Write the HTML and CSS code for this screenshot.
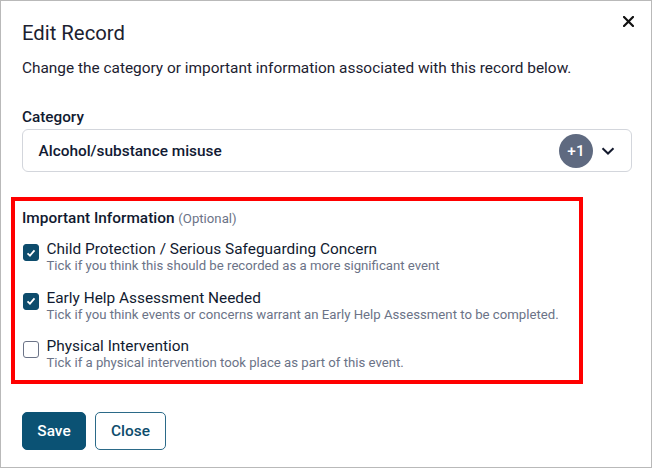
FILE: index.html
```html
<!DOCTYPE html>
<html lang="en">
<head>
<meta charset="utf-8">
<title>Edit Record</title>
<link rel="stylesheet" href="styles.css">
</head>
<body>
<div class="modal">
  <div class="header">
    <h1 class="title">Edit Record</h1>
    <button class="close-x" aria-label="Close">
      <svg width="11" height="11" viewBox="0 0 11 11"><path d="M1 1L10 10M10 1L1 10" stroke="#111" stroke-width="2.2" stroke-linecap="square"/></svg>
    </button>
  </div>
  <p class="desc">Change the category or important information associated with this record below.</p>

  <div class="field">
    <div class="label">Category</div>
    <div class="select">
      <span class="select-text">Alcohol/substance misuse</span>
      <span class="badge">+1</span>
      <svg class="chevron" width="14" height="8" viewBox="0 0 14 8"><path d="M1.5 1.2L7 6.5L12.5 1.2" fill="none" stroke="#141a2e" stroke-width="2"/></svg>
    </div>
  </div>

  <div class="highlight">
    <div class="section-title">Important Information <span class="optional">(Optional)</span></div>
    <div class="items">
      <div class="item">
        <span class="box checked"><svg width="16" height="16" viewBox="0 0 16 16"><path d="M4 8.3L6.8 11L12 5" fill="none" stroke="#fff" stroke-width="2"/></svg></span>
        <div class="item-text">
          <div class="item-title">Child Protection / Serious Safeguarding Concern</div>
          <div class="item-help">Tick if you think this should be recorded as a more significant event</div>
        </div>
      </div>
      <div class="item">
        <span class="box checked"><svg width="16" height="16" viewBox="0 0 16 16"><path d="M4 8.3L6.8 11L12 5" fill="none" stroke="#fff" stroke-width="2"/></svg></span>
        <div class="item-text">
          <div class="item-title">Early Help Assessment Needed</div>
          <div class="item-help">Tick if you think events or concerns warrant an Early Help Assessment to be completed.</div>
        </div>
      </div>
      <div class="item">
        <span class="box"></span>
        <div class="item-text">
          <div class="item-title">Physical Intervention</div>
          <div class="item-help">Tick if a physical intervention took place as part of this event.</div>
        </div>
      </div>
    </div>
  </div>

  <div class="actions">
    <button class="btn btn-primary">Save</button>
    <button class="btn btn-outline">Close</button>
  </div>
</div>
</body>
</html>
```

FILE: styles.css
```css
* { box-sizing: border-box; }
html, body { margin: 0; padding: 0; background: #fff; }
body { font-family: Roboto, "Liberation Sans", Arial, sans-serif; color: #1c2130; }

.modal {
  width: 652px;
  height: 468px;
  border: 1px solid #b9b9b9;
  padding: 19.5px 19.5px 0 21px;
  background: #fff;
}

.header {
  display: flex;
  justify-content: space-between;
  align-items: flex-start;
}
.title {
  margin: 0;
  font-size: 20.3px;
  line-height: 24px;
  font-weight: 400;
  color: #1c2130;
}
.close-x {
  width: 20px;
  height: 20px;
  margin: -9.5px -6.5px 0 0;
  padding: 0;
  border: 0;
  background: transparent;
  display: flex;
  align-items: center;
  justify-content: center;
}

.desc {
  margin: 13.5px 0 0 0;
  font-size: 15.4px;
  line-height: 20px;
  color: #1c2130;
}

.field { margin-top: 30px; }
.label {
  font-size: 15.3px;
  line-height: 18px;
  font-weight: 500;
  color: #111a30;
  margin-bottom: 3px;
}
.select {
  height: 43px;
  border: 1px solid #d3d6dc;
  border-radius: 6px;
  display: flex;
  align-items: center;
  padding: 0 16px 0 15.5px;
}
.select-text {
  flex: 1;
  font-size: 15.4px;
  font-weight: 500;
  color: #111a33;
}
.badge {
  width: 34px;
  height: 34px;
  border-radius: 50%;
  background: #5f6a80;
  color: #fff;
  font-size: 15.4px;
  font-weight: 500;
  display: flex;
  align-items: center;
  justify-content: center;
  margin-right: 7.5px;
}
.chevron { display: block; }

.highlight {
  margin: 25px 0 0 -11px;
  width: 572px;
  border: 4px solid #ff0000;
  padding: 8px 7px 9px 7px;
}
.section-title {
  font-size: 15.4px;
  line-height: 18px;
  font-weight: 500;
  color: #111a30;
}
.optional {
  font-size: 13.2px;
  font-weight: 400;
  color: #6b7387;
}
.items {
  margin-top: 12px;
  display: flex;
  flex-direction: column;
  gap: 14.5px;
}
.item {
  display: flex;
  align-items: flex-start;
  gap: 7.5px;
}
.box {
  flex: none;
  width: 16px;
  height: 17px;
  margin: 4px 0 0 1px;
  border: 1px solid #6b7387;
  border-radius: 3px;
  background: #fff;
  display: flex;
  align-items: center;
  justify-content: center;
}
.box.checked {
  background: #0d4c6c;
  border-color: #0d4c6c;
}
.box svg { display: block; }
.item-title {
  font-size: 15.4px;
  line-height: 18px;
  color: #111a30;
}
.item-help {
  font-size: 13.2px;
  line-height: 16px;
  color: #6b7387;
}

.actions {
  margin-top: 27.5px;
  display: flex;
  gap: 9px;
}
.btn {
  height: 38px;
  border-radius: 5px;
  font-family: Roboto, "Liberation Sans", Arial, sans-serif;
  font-size: 15.4px;
  font-weight: 500;
  padding: 0;
}
.btn-primary {
  width: 64px;
  background: #0b5274;
  border: 1px solid #0b5274;
  color: #fff;
}
.btn-outline {
  width: 71px;
  background: #fff;
  border: 1.5px solid #2b6a88;
  color: #0d4c6c;
}
```
